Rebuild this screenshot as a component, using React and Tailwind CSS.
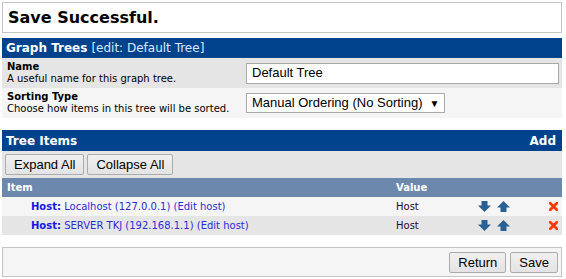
import React from "react";

const V = { fontFamily: '"DejaVu Sans", Verdana, sans-serif' };
const A = { fontFamily: '"Liberation Sans", Arial, sans-serif' };

function Down() {
  return (
    <svg width="13" height="11" viewBox="0 0 13 11">
      <path d="M3.5 0 H9.5 V4.5 H13 L6.5 11 L0 4.5 H3.5 Z" fill="#2a6194" />
    </svg>
  );
}
function Up() {
  return (
    <svg width="13" height="11" viewBox="0 0 13 11">
      <path d="M3.5 11 H9.5 V6.5 H13 L6.5 0 L0 6.5 H3.5 Z" fill="#2a6194" />
    </svg>
  );
}
function X() {
  return (
    <svg width="9" height="9" viewBox="0 0 9 9">
      <path d="M1.2 1.2 L7.8 7.8 M7.8 1.2 L1.2 7.8" stroke="#ff3a00" strokeWidth="2.8" strokeLinecap="square" />
    </svg>
  );
}

function Btn({ children }) {
  return (
    <button
      className="h-[21px] px-[8px] border border-[#acacac] rounded-[2px] bg-gradient-to-b from-[#f0f0f0] to-[#e3e3e3] text-[13px] leading-none text-black"
      style={A}
    >
      {children}
    </button>
  );
}

function Row({ name, bg }) {
  return (
    <div className={`flex items-center h-[19px] ${bg} text-[10px]`} style={V}>
      <div className="w-[394px] pl-[29px] text-[#2b2bd6]">
        <span className="font-bold text-[#1515e0]">Host:</span> {name} (Edit host)
      </div>
      <div className="w-[82px] text-[#2a0a2a]">Host</div>
      <div className="flex items-center gap-[6px] w-[71px]">
        <Down />
        <Up />
      </div>
      <div className="flex items-center">
        <X />
      </div>
    </div>
  );
}

export default function App() {
  return (
    <div className="w-[560px] ml-[2px] pt-[2px] bg-white" style={V}>
      <div className="h-[31px] border border-[#c4c4c4] flex items-center pl-[5px]">
        <span className="text-[16px] font-bold text-black">Save Successful.</span>
      </div>

      <div className="mt-[5px] h-[20px] bg-[#00438c] flex items-center pl-[4px] text-[12px] text-white">
        <span className="font-bold">Graph Trees</span>
        <span className="ml-[4px] text-[#dce8ff]">[edit: Default Tree]</span>
      </div>

      <div className="h-[30px] bg-[#e5e5e5] flex items-center text-[10px] text-black">
        <div className="w-[244px] pl-[5px] leading-[12px]">
          <div className="font-bold">Name</div>
          <div>A useful name for this graph tree.</div>
        </div>
        <div className="h-[21px] w-[313px] border border-[#a9a9a9] bg-white flex items-center pl-[5px] text-[13px]" style={A}>
          Default Tree
        </div>
      </div>

      <div className="h-[30px] bg-[#f5f5f5] flex items-center text-[10px] text-black">
        <div className="w-[244px] pl-[5px] leading-[12px]">
          <div className="font-bold">Sorting Type</div>
          <div>Choose how items in this tree will be sorted.</div>
        </div>
        <div className="h-[20px] w-[199px] border border-[#a9a9a9] bg-white flex items-center pl-[5px] text-[13px]" style={A}>
          Manual Ordering (No Sorting)
          <span className="ml-[7px] text-[10px]">▼</span>
        </div>
      </div>

      <div className="mt-[12px] h-[21px] bg-[#00438c] flex items-center justify-between pl-[4px] pr-[6px] text-[12px] text-white font-bold">
        <span>Tree Items</span>
        <span>Add</span>
      </div>

      <div className="h-[27px] bg-[#e5e5e5] flex items-center gap-[3px] pl-[3px]">
        <Btn>Expand All</Btn>
        <Btn>Collapse All</Btn>
      </div>

      <div className="h-[19px] bg-[#6d88ad] flex items-center text-[10px] font-bold text-white">
        <div className="w-[394px] pl-[5px]">Item</div>
        <div>Value</div>
      </div>

      <Row name="Localhost (127.0.0.1)" bg="bg-[#f5f5f5]" />
      <Row name="SERVER TKJ (192.168.1.1)" bg="bg-[#e5e5e5]" />

      <div className="mt-[12px] h-[30px] border border-[#c4c4c4] bg-[#f5f5f5] flex items-center justify-end gap-[4px] pr-[3px]">
        <Btn>Return</Btn>
        <Btn>Save</Btn>
      </div>
    </div>
  );
}
